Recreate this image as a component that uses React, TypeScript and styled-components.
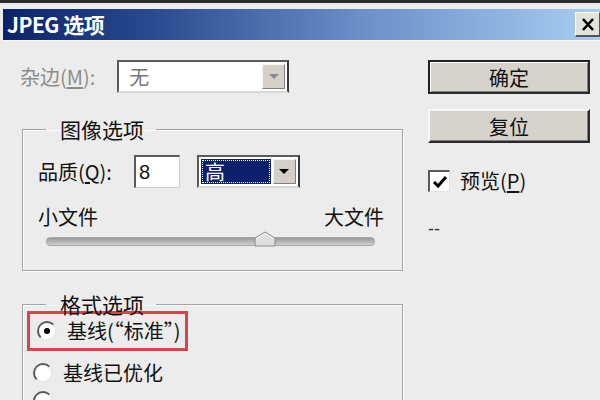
import React from 'react';
import styled, { createGlobalStyle } from 'styled-components';

const GlobalStyle = createGlobalStyle`
  html, body {
    margin: 0;
    padding: 0;
    background: #ececec;
  }
  body {
    font-family: 'Noto Sans CJK SC', 'Noto Sans', sans-serif;
    color: #111;
  }
`;

const Window = styled.div`
  width: 600px;
  height: 400px;
  overflow: hidden;
  background: #ececec;
  border-top: 3px solid #2b2b2b;
  box-sizing: border-box;
  padding: 6px 0 0 3px;
  display: flex;
  flex-direction: column;
`;

const TitleBar = styled.div`
  flex-shrink: 0;
  height: 31px;
  display: flex;
  align-items: center;
  justify-content: space-between;
  background: linear-gradient(to right, #0b236a 0%, #2a4a8e 25%, #6b8fc8 60%, #a9cdf2 100%);
  padding-left: 4px;
`;

const Title = styled.div`
  color: #fff;
  font-size: 21px;
  font-weight: 700;
  letter-spacing: -0.5px;
  line-height: 1;
`;

const CloseButton = styled.div`
  width: 23px;
  height: 22px;
  background: #e4e2dc;
  border-top: 1px solid #fff;
  border-left: 1px solid #fff;
  border-right: 1px solid #555;
  border-bottom: 2px solid #555;
  display: flex;
  align-items: center;
  justify-content: center;
`;

const Body = styled.div`
  flex-shrink: 0;
  display: flex;
  padding-top: 19px;
  border-top: 1px solid #f8f8f8;
`;

const LeftCol = styled.div`
  width: 404px;
  padding-left: 17px;
  box-sizing: border-box;
  display: flex;
  flex-direction: column;
`;

const RightCol = styled.div`
  margin-left: 21px;
  width: 162px;
  display: flex;
  flex-direction: column;
`;

const Row = styled.div`
  display: flex;
  align-items: center;
`;

const Label = styled.span<{ $disabled?: boolean }>`
  font-size: 20px;
  line-height: 24px;
  color: ${(p) => (p.$disabled ? '#8c8c8c' : '#111')};
  white-space: nowrap;
`;

const Select = styled.div<{ $width: number }>`
  width: ${(p) => p.$width}px;
  height: 33px;
  box-sizing: border-box;
  background: #fff;
  border-top: 2px solid #5a5a5a;
  border-left: 2px solid #5a5a5a;
  border-right: 2px solid #3a3a3a;
  border-bottom: 2px solid #d8d8d8;
  display: flex;
  align-items: stretch;
  padding: 2px;
`;

const SelectValue = styled.div<{ $highlight?: boolean; $disabled?: boolean }>`
  flex: 1;
  display: flex;
  align-items: center;
  padding-left: ${(p) => (p.$highlight ? '4px' : '8px')};
  font-size: 20px;
  color: ${(p) => (p.$highlight ? '#fff' : p.$disabled ? '#777' : '#111')};
  background: ${(p) => (p.$highlight ? '#0e1f6c' : 'transparent')};
  outline: ${(p) => (p.$highlight ? '1px dotted #fff' : 'none')};
  outline-offset: -2px;
  margin-right: 2px;
`;

const ArrowButton = styled.div`
  width: 21px;
  background: #d4d0c8;
  border-top: 1px solid #f4f4f4;
  border-left: 1px solid #f4f4f4;
  border-right: 1px solid #808080;
  border-bottom: 1px solid #808080;
  display: flex;
  align-items: center;
  justify-content: center;
`;

const Arrow = styled.div<{ $disabled?: boolean }>`
  width: 0;
  height: 0;
  border-left: 5px solid transparent;
  border-right: 5px solid transparent;
  border-top: 5px solid ${(p) => (p.$disabled ? '#8a8a8a' : '#000')};
`;

const Group = styled.fieldset<{ $height: number }>`
  margin: 0 0 0 2px;
  width: 381px;
  height: ${(p) => p.$height}px;
  box-sizing: border-box;
  border: 1px solid #a3a3a3;
  box-shadow: inset 1px 1px 0 #fbfbfb, 1px 1px 0 #fbfbfb;
  padding: 0 15px 0 15px;
  min-inline-size: 0;
`;

const Legend = styled.legend`
  margin-left: 8px;
  padding: 0 12px 0 14px;
  font-size: 21px;
  line-height: 26px;
  color: #111;
`;

const Input = styled.div`
  width: 46px;
  height: 33px;
  box-sizing: border-box;
  background: #fff;
  border-top: 2px solid #5a5a5a;
  border-left: 2px solid #5a5a5a;
  border-right: 1px solid #cfcfcf;
  border-bottom: 1px solid #cfcfcf;
  font-family: 'Liberation Sans', sans-serif;
  font-size: 20px;
  display: flex;
  align-items: center;
  padding-left: 3px;
`;

const SliderLabels = styled.div`
  display: flex;
  justify-content: space-between;
  margin-top: 17px;
  padding-right: 3px;
`;

const Track = styled.div`
  position: relative;
  margin: 8px 12px 0 8px;
  height: 7px;
  border-radius: 4px;
  background: linear-gradient(#9a9a9a, #cfcfcf);
  border: 1px solid #a8a8a8;
`;

const Thumb = styled.svg`
  position: absolute;
  left: 207px;
  top: -7px;
`;

const Highlight = styled.div`
  margin: -6px 0 0 -11px;
  width: 161px;
  height: 40px;
  box-sizing: border-box;
  border: 3px solid #d0474c;
  display: flex;
  align-items: center;
  padding-left: 7px;
`;

const RadioRow = styled.div`
  display: flex;
  align-items: center;
  margin: 10px 0 0 -5px;
`;

const Radio = styled.span<{ $checked?: boolean }>`
  width: 20px;
  height: 20px;
  border-radius: 50%;
  box-sizing: border-box;
  background: #fff;
  border: 2px solid;
  border-color: #5a5a5a #e8e8e8 #e8e8e8 #5a5a5a;
  margin-right: 10px;
  display: flex;
  align-items: center;
  justify-content: center;
  &::after {
    content: '';
    width: 6px;
    height: 6px;
    border-radius: 50%;
    background: ${(p) => (p.$checked ? '#000' : 'transparent')};
  }
`;

const Button = styled.div<{ $default?: boolean }>`
  height: 34px;
  box-sizing: border-box;
  background: #d6d3cd;
  border-top: 2px solid ${(p) => (p.$default ? '#222' : '#f6f6f6')};
  border-left: 2px solid ${(p) => (p.$default ? '#222' : '#f6f6f6')};
  border-right: 2px solid #2a2a2a;
  border-bottom: 2px solid #2a2a2a;
  box-shadow: ${(p) => (p.$default ? 'inset 1px 1px 0 #fff, inset -1px -1px 0 #808080' : 'inset -1px -1px 0 #808080')};
  display: flex;
  align-items: center;
  justify-content: center;
  font-size: 20px;
  color: #111;
  margin-bottom: 15px;
`;

const CheckRow = styled.div`
  display: flex;
  align-items: center;
  margin-top: 11px;
`;

const CheckBox = styled.span`
  width: 22px;
  height: 22px;
  box-sizing: border-box;
  background: #fff;
  border-top: 2px solid #5a5a5a;
  border-left: 2px solid #5a5a5a;
  border-right: 1px solid #e0e0e0;
  border-bottom: 1px solid #e0e0e0;
  margin-right: 10px;
  display: flex;
  align-items: center;
  justify-content: center;
`;

const Dashes = styled.div`
  margin-top: 26px;
  font-family: 'Liberation Sans', sans-serif;
  font-size: 18px;
  color: #333;
`;

const U = styled.span`
  text-decoration: underline;
  text-underline-offset: 2px;
`;

export default function App() {
  return (
    <>
      <GlobalStyle />
      <Window>
        <TitleBar>
          <Title>JPEG 选项</Title>
          <CloseButton>
            <svg width="14" height="13" viewBox="0 0 14 13">
              <path d="M2 1 L12 12 M12 1 L2 12" stroke="#000" strokeWidth="2.6" />
            </svg>
          </CloseButton>
        </TitleBar>
        <Body>
          <LeftCol>
            <Row>
              <Label $disabled>
                杂边(<U>M</U>):
              </Label>
              <Select $width={172} style={{ marginLeft: 22 }}>
                <SelectValue $disabled>无</SelectValue>
                <ArrowButton>
                  <Arrow $disabled />
                </ArrowButton>
              </Select>
            </Row>

            <Group $height={155} style={{ marginTop: 23 }}>
              <Legend>图像选项</Legend>
              <Row style={{ marginTop: 13 }}>
                <Label>
                  品质(<U>Q</U>):
                </Label>
                <Input style={{ marginLeft: 22 }}>8</Input>
                <Select $width={103} style={{ marginLeft: 17 }}>
                  <SelectValue $highlight>高</SelectValue>
                  <ArrowButton>
                    <Arrow />
                  </ArrowButton>
                </Select>
              </Row>
              <SliderLabels>
                <Label>小文件</Label>
                <Label>大文件</Label>
              </SliderLabels>
              <Track>
                <Thumb width="22" height="16" viewBox="0 0 22 16">
                  <path d="M1 7 L11 1 L21 7 L21 15 L1 15 Z" fill="#dedede" stroke="#8a8a8a" strokeWidth="1" />
                  <path d="M2 8 L11 2.5 L20 8" fill="none" stroke="#fff" strokeWidth="1" />
                </Thumb>
              </Track>
            </Group>

            <Group $height={140} style={{ marginTop: 20 }}>
              <Legend>格式选项</Legend>
              <Highlight>
                <Radio $checked />
                <Label>基线(“标准”)</Label>
              </Highlight>
              <RadioRow>
                <Radio />
                <Label>基线已优化</Label>
              </RadioRow>
              <RadioRow style={{ marginTop: 6 }}>
                <Radio />
              </RadioRow>
            </Group>
          </LeftCol>

          <RightCol>
            <Button $default>确定</Button>
            <Button>复位</Button>
            <CheckRow>
              <CheckBox>
                <svg width="16" height="14" viewBox="0 0 16 14">
                  <path d="M2 7 L6 11 L14 2" fill="none" stroke="#000" strokeWidth="3" />
                </svg>
              </CheckBox>
              <Label>
                预览(<U>P</U>)
              </Label>
            </CheckRow>
            <Dashes>--</Dashes>
          </RightCol>
        </Body>
      </Window>
    </>
  );
}
